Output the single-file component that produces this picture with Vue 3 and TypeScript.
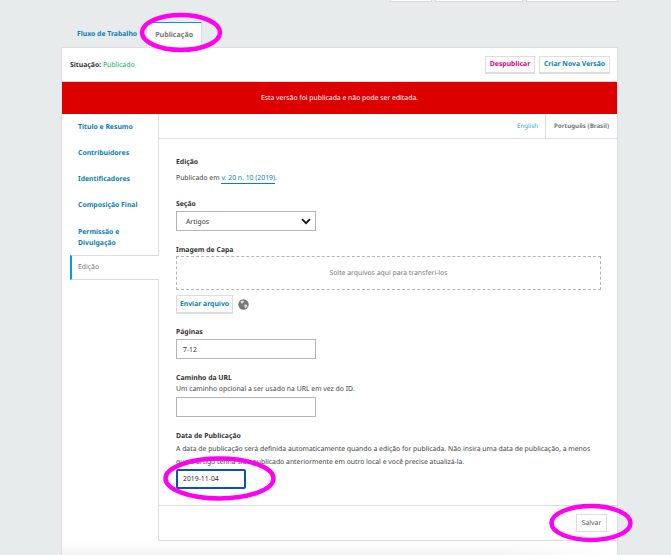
<script setup lang="ts">
const topButtons = [
  { name: 'a', width: 42 },
  { name: 'b', width: 88 },
  { name: 'c', width: 92 },
]

const navItems = ['Título e Resumo', 'Contribuidores', 'Identificadores', 'Composição Final']
</script>

<template>
  <div class="page">
    <div class="top-actions">
      <span v-for="b in topButtons" :key="b.name" class="top-btn" :style="{ width: b.width + 'px' }"></span>
    </div>

    <div class="tabs">
      <a class="tab">Fluxo de Trabalho</a>
      <a class="tab tab--active">Publicação</a>
    </div>

    <div class="card">
      <div class="status-bar">
        <div class="status"><b>Situação:</b> <span class="status__value">Publicado</span></div>
        <div class="status-actions">
          <button class="btn btn--danger">Despublicar</button>
          <button class="btn btn--version">Criar Nova Versão</button>
        </div>
      </div>

      <div class="notice">Esta versão foi publicada e não pode ser editada.</div>

      <div class="layout">
        <nav class="side">
          <a v-for="item in navItems" :key="item" class="side__item">{{ item }}</a>
          <a class="side__item side__item--double">Permissão e Divulgação</a>
          <a class="side__item side__item--active">Edição</a>
        </nav>

        <div class="content">
          <div class="locales">
            <a class="locale">English</a>
            <a class="locale locale--active">Português (Brasil)</a>
          </div>

          <form class="form" @submit.prevent>
            <div class="field field--issue">
              <div class="label">Edição</div>
              <p class="text">Publicado em <a class="link">v. 20 n. 10 (2019)</a>.</p>
            </div>

            <div class="field field--section">
              <div class="label">Seção</div>
              <div class="select">
                <span>Artigos</span>
                <svg class="select__arrow" width="10" height="7" viewBox="0 0 10 7">
                  <path d="M1 1.2l4 4 4-4" fill="none" stroke="#111" stroke-width="1.8" />
                </svg>
              </div>
            </div>

            <div class="field field--cover">
              <div class="label">Imagem de Capa</div>
              <div class="drop">Solte arquivos aqui para transferi-los</div>
              <div class="upload">
                <button class="btn btn--upload">Enviar arquivo</button>
                <svg width="11" height="11" viewBox="0 0 11 11">
                  <circle cx="5.5" cy="5.5" r="5.2" fill="#777" />
                  <path d="M2.5 2.2l2.6-.8 1 1.3-1.2 1.6-1.6.2zM6.3 5.4l2.6.3.6 1.6-2 2.2-1-1.8z" fill="#ddd" />
                </svg>
              </div>
            </div>

            <div class="field field--pages">
              <div class="label">Páginas</div>
              <div class="input">7-12</div>
            </div>

            <div class="field field--path">
              <div class="label">Caminho da URL</div>
              <p class="desc">Um caminho opcional a ser usado na URL em vez do ID.</p>
              <div class="input"></div>
            </div>

            <div class="field field--date">
              <div class="label">Data de Publicação</div>
              <p class="desc desc--long">
                A data de publicação será definida automaticamente quando a edição for publicada. Não insira uma data de publicação, a menos que o artigo tenha sido publicado anteriormente em outro local e você precise atualizá-la.
              </p>
              <div class="input input--date">2019-11-04</div>
            </div>
          </form>

          <div class="form-footer">
            <button class="btn btn--save">Salvar</button>
          </div>
        </div>
      </div>
      <div class="card-end"></div>
    </div>

    <!-- marcações feitas à mão sobre a captura -->
    <svg class="marks" width="671" height="555" viewBox="0 0 671 555">
      <ellipse cx="181" cy="32.5" rx="39" ry="17.5" />
      <ellipse cx="219.5" cy="478.5" rx="54" ry="20" />
      <ellipse cx="591" cy="523" rx="39.5" ry="17" />
    </svg>
  </div>
</template>

<style scoped>
.page {
  position: relative;
  width: 671px;
  height: 555px;
  overflow: hidden;
  background: #e8ebec;
  color: #333;
  font-family: "Noto Sans", sans-serif;
  font-size: 6.85px;
  text-rendering: geometricPrecision;
}

.top-actions {
  display: flex;
  justify-content: flex-end;
  gap: 3px;
  height: 2px;
  padding-right: 53px;
}

.top-btn {
  height: 2px;
  background: #fff;
  border: 1px solid #d8d8d8;
  border-top: 0;
  box-sizing: border-box;
}

.tabs {
  display: flex;
  align-items: flex-end;
  height: 45px;
  margin-left: 77px;
  font-weight: 700;
}

.tab {
  color: #0a7fb5;
  height: 24px;
  line-height: 24px;
}

.tab--active {
  margin-left: 9px;
  padding: 0 8px;
  color: #777;
  font-size: 7.1px;
  background: #fff;
  border-top: 1px solid #009de5;
  border-left: 1px solid #ddd;
  border-right: 1px solid #ddd;
}

.card {
  width: 557px;
  margin-left: 61px;
  background: #fff;
  border: 1px solid #ddd;
  border-bottom: 0;
  box-sizing: border-box;
}

.status-bar {
  display: flex;
  align-items: center;
  justify-content: space-between;
  height: 32px;
  padding: 1px 7px 0 8px;
  border-bottom: 1px solid #ddd;
}

.status b {
  font-weight: 700;
}

.status__value {
  color: #00b84f;
}

.status-actions {
  display: flex;
  gap: 4px;
}

.btn {
  height: 18px;
  padding: 0;
  background: #fff;
  border: 1px solid #ddd;
  border-bottom-width: 2px;
  color: #0a7fb5;
  font: 700 6.85px "Noto Sans", sans-serif;
  text-rendering: geometricPrecision;
}

.btn--danger {
  width: 50px;
  color: #e5007d;
}

.btn--version {
  width: 71px;
}

.notice {
  height: 32px;
  line-height: 34px;
  background: #dc0000;
  color: #fff;
  text-align: center;
}

.layout {
  display: flex;
}

.side {
  flex: none;
  width: 97px;
  padding: 0 0 0 8px;
  box-sizing: border-box;
  position: relative;
  z-index: 1;
  background: linear-gradient(to left, #ddd 1px, transparent 1px);
}

.side__item {
  display: flex;
  align-items: center;
  height: 26px;
  padding-left: 8px;
  color: #0a7fb5;
  font-weight: 700;
}

.side__item--double {
  height: 36px;
  width: 70px;
  padding-top: 3px;
  line-height: 11px;
  box-sizing: border-box;
}

.side__item--active {
  box-sizing: border-box;
  height: 25px;
  margin-top: 1px;
  padding-left: 6px;
  background: #fff;
  color: #777;
  font-weight: 400;
  border-left: 2px solid #009de5;
  border-top: 1px solid #ddd;
  border-bottom: 1px solid #ddd;
}

.content {
  flex: 1;
  min-width: 0;
}

.locales {
  display: flex;
  justify-content: flex-end;
  height: 24px;
  border-bottom: 1px solid #ddd;
  line-height: 24px;
  font-size: 6.2px;
}

.locale {
  padding-right: 7px;
  color: #2f9fd0;
}

.locale--active {
  padding: 0 8px;
  color: #777;
  font-weight: 700;
  border-left: 1px solid #ddd;
}

.form {
  height: 366px;
  padding: 0 17px;
  box-sizing: border-box;
  overflow: hidden;
}

.label {
  height: 11px;
  font-weight: 700;
  line-height: 13px;
  color: #333;
}

.text,
.desc {
  margin: 0;
  line-height: 13px;
  color: #444;
}

.field--issue {
  padding-top: 17px;
}

.field--issue .text {
  margin-top: 5px;
}

.link {
  color: #0a7fb5;
  border-bottom: 1px solid #0a7fb5;
}

.field--section {
  margin-top: 13px;
}

.select,
.input {
  display: flex;
  align-items: center;
  justify-content: space-between;
  height: 20px;
  width: 140px;
  margin-top: 2px;
  padding: 2px 4px 0 6px;
  box-sizing: border-box;
  background: #fff;
  border: 1px solid #b5b5b5;
}

.select {
  padding-left: 9px;
}

.select__arrow {
  margin-top: -2px;
}

.field--cover {
  margin-top: 13px;
}

.drop {
  display: flex;
  align-items: center;
  justify-content: center;
  width: 425px;
  height: 34px;
  margin-top: 1px;
  padding-top: 1px;
  box-sizing: border-box;
  border: 1px dashed #b5b5b5;
  color: #777;
}

.upload {
  display: flex;
  align-items: center;
  gap: 5px;
  margin-top: 5px;
}

.btn--upload {
  width: 57px;
  height: 19px;
}

.field--pages {
  margin-top: 12px;
}

.field--path {
  margin-top: 13px;
}

.field--path .desc {
  margin-top: 0;
}

.field--path .input {
  margin-top: 1px;
}

.field--date {
  margin-top: 14px;
}

.field--date .label {
  line-height: 11px;
}

.desc--long {
  margin-top: 1px;
  width: 425px;
}

.input--date {
  width: 70px;
  margin-top: 0;
  padding-top: 0;
  border: 2px solid #0b4fc4;
  border-radius: 2px;
  padding-left: 5px;
}

.form-footer {
  display: flex;
  justify-content: flex-end;
  align-items: center;
  height: 34px;
  padding-right: 10px;
  border-top: 1px solid #ddd;
  border-bottom: 1px solid #ddd;
}

.btn--save {
  width: 31px;
  height: 18px;
  color: #555;
  font-weight: 400;
  border-bottom-width: 1px;
}

.card-end {
  height: 20px;
  background:
    linear-gradient(to right, transparent 80%, #fff),
    linear-gradient(to bottom, #fff, #efefef);
}

.marks {
  position: absolute;
  inset: 0;
  pointer-events: none;
}

.marks ellipse {
  fill: none;
  stroke: #ff00f0;
  stroke-width: 4.5;
}
</style>

<style>
body {
  margin: 0;
}
</style>
